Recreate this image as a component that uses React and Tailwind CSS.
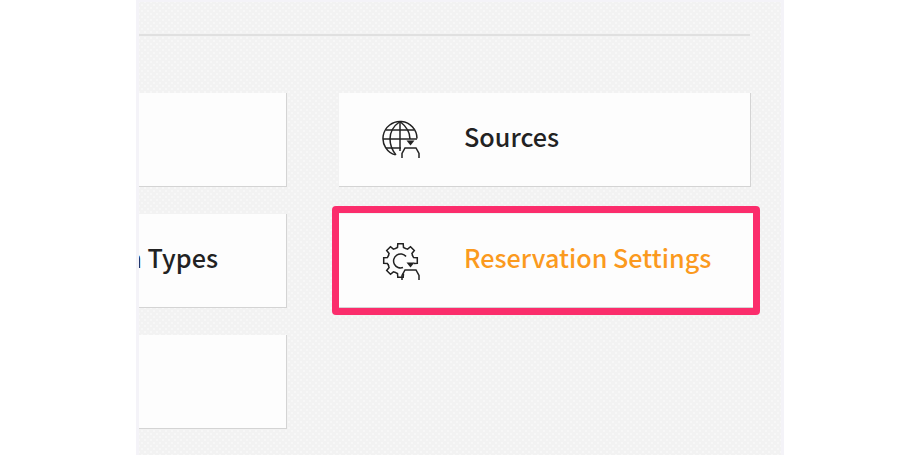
import React from "react";

// 8-tooth outline, open at the lower right where the guest figure sits
function gearPath(cx, cy) {
  const pts = [];
  for (let i = 0; i < 8; i++) {
    const a = -45 + i * 45;
    [[-27, 13], [-13, 13.4], [-9, 17], [9, 17], [13, 13.4], [27, 13]].forEach(([d, r]) => {
      const t = ((a + d) * Math.PI) / 180;
      pts.push([cx + r * Math.cos(t), cy + r * Math.sin(t)]);
    });
  }
  const open = [...pts.slice(19), ...pts.slice(0, 11)];
  return "M" + open.map((p) => p[0].toFixed(1) + " " + p[1].toFixed(1)).join(" L");
}

function GuestBadge({ y }) {
  return (
    <g transform={`translate(0 ${y})`}>
      <path d="M24.5 20.5 H32.5 L28.5 25.5 Z" fill="#222" stroke="none" />
      <path d="M20 38 v-4.5 l3 -5.5 h11 l3 5.5 v4.5" />
    </g>
  );
}

function GlobeIcon() {
  return (
    <svg width="40" height="40" viewBox="0 0 40 40" fill="none" stroke="#222" strokeWidth="1.5" className="shrink-0 mt-[1px]">
      <path d="M13.5 34.9 A17 17 0 1 1 35 18.5" />
      <path d="M18 1.5 C10 7 8 13 8 19 C8 25 10 30 14 34.9" />
      <path d="M18 1.5 C25 7 28 13 28 19" />
      <path d="M18 1.5 V31" />
      <path d="M4 10 H32" />
      <path d="M1 19 H35" />
      <path d="M4 28 H19" />
      <GuestBadge y={0} />
    </svg>
  );
}

function GearIcon() {
  return (
    <svg width="40" height="40" viewBox="0 0 40 40" fill="none" stroke="#222" strokeWidth="1.5" className="shrink-0">
      <path d={gearPath(18.5, 19.5)} />
      <path d="M24 15.5 A7 7 0 1 0 21 26.5" />
      <GuestBadge y={1} />
    </svg>
  );
}

function Card({ children, className = "" }) {
  return (
    <div className={"h-[94px] bg-[#fdfdfd] border-r border-b border-[#d4d4d4] flex items-center text-[25.2px] font-medium text-[#222] " + className}>
      {children}
    </div>
  );
}

export default function App() {
  return (
    <div className="h-[455px] w-[920px] bg-white overflow-hidden font-['Noto_Sans_CJK_JP','Noto_Sans',sans-serif]">
      <div className="ml-[136px] h-[455px] w-[648px] pt-[2px] bg-[#f4f3f8]">
        <div className="h-full mx-[3px] overflow-hidden bg-[#f2f2f2] bg-[radial-gradient(#f7f7f7_30%,transparent_36%),radial-gradient(#f7f7f7_30%,transparent_36%)] bg-size-[6px_6px] bg-position-[0_0,3px_3px]">
          <div className="mt-[32px] mr-[31px] h-[2px] bg-[#e0e0e0]" />
          <div className="mt-[57px] flex gap-[52px] mr-[30px]">
            <div className="w-[148px] shrink-0 flex flex-col gap-[27px]">
              <Card />
              <Card className="justify-end pr-[68px] whitespace-nowrap">
                <span className="mb-[6px]">Reservation Types</span>
              </Card>
              <Card />
            </div>
            <div className="flex-1 flex flex-col gap-[27px]">
              <Card className="pl-[43px] gap-[42px]">
                <GlobeIcon />
                <span className="mb-[6px]">Sources</span>
              </Card>
              <div className="relative">
                <Card className="-mr-[3px] pl-[43px] gap-[42px] text-[#fb9a1e] whitespace-nowrap">
                  <GearIcon />
                  <span className="mb-[6px]">Reservation Settings</span>
                </Card>
                <div className="absolute -top-[8px] -bottom-[7px] -left-[7px] -right-[9px] border-[7px] border-[#fb2d6c] rounded-[4px]" />
              </div>
            </div>
          </div>
        </div>
      </div>
    </div>
  );
}
